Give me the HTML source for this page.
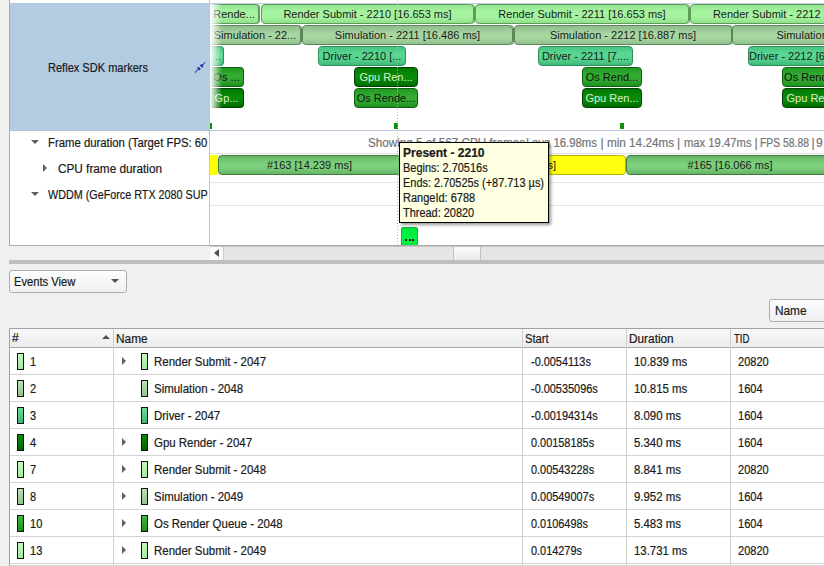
<!DOCTYPE html><html><head><meta charset="utf-8"><style>
*{margin:0;padding:0;box-sizing:border-box}
html,body{width:824px;height:566px;overflow:hidden;background:#f0f0f0;font-family:"Liberation Sans",sans-serif;color:#1a1a1a}
body{position:relative}
.a{position:absolute}
.t{position:absolute;white-space:nowrap;font-size:11px;line-height:13px;-webkit-text-stroke:0.2px currentColor}
.bar{position:absolute;height:20px;border:1px solid;border-radius:4px;font-size:11px;line-height:18px;text-align:center;white-space:nowrap;overflow:hidden}
.rs{background:linear-gradient(#94e490,#a6f4a0 40%,#a4f29e 70%,#92e08c);border-color:#5c9e58}
.sim{background:linear-gradient(#90bc8c,#a8d8a2 45%,#a6d4a0 70%,#92c08e);border-color:#5a8858}
.drv{background:linear-gradient(#48c482,#5ad894 40%,#54d08c 70%,#40b87a);border-color:#2a9058}
.osr{background:linear-gradient(#229a22,#34ae34 45%,#30a830 70%,#1e901e);border-color:#0e600e;color:#101010}
.gpu{background:linear-gradient(#007800,#0a8c0a 45%,#068406 70%,#006c00);border-color:#004000;color:#dcefcc}
.cpu{background:linear-gradient(#66b466,#7ed27e 45%,#7ccf7c 65%,#66b466);border-color:#3e7c3e}
.sh.rs{box-shadow:1px 0 0 #5c9e58}.sh.sim{box-shadow:1px 0 0 #5e8e5c}
.yel{background:#ffff10;border-color:#b8b800}
.tri-d{position:absolute;width:0;height:0;border-left:4px solid transparent;border-right:4px solid transparent;border-top:4px solid #606060}
.tri-r{position:absolute;width:0;height:0;border-top:4px solid transparent;border-bottom:4px solid transparent;border-left:4px solid #606060}
.chip{position:absolute;width:7px;height:17px;border:1px solid #111}
.chip.rs{background:linear-gradient(#c4f8be,#a0ec9a)}.chip.sim{background:linear-gradient(#bce0b6,#92c28e)}.chip.drv{background:linear-gradient(#6cdc9c,#40b474)}.chip.gpu{background:linear-gradient(#0a8c0a,#006400)}.chip.osr{background:linear-gradient(#3cbc3c,#1e8e1e)}
</style></head><body>
<div class="a" style="left:9px;top:0px;width:815px;height:246px;background:#fff;border-left:1px solid #acacac;border-bottom:1px solid #acacac"></div>
<div class="a" style="left:10px;top:3px;width:199px;height:128px;background:#b4cce2;border-bottom:1px solid #aac4de"></div>
<div class="a" style="left:209px;top:0px;width:1px;height:245px;background:#c4c4c4"></div>
<div class="a" style="left:210px;top:3px;width:614px;height:1px;background:#bcd2ec"></div>
<div class="a" style="left:210px;top:130px;width:614px;height:1px;background:#b8c8d8"></div>
<div class="a" style="left:210px;top:153px;width:614px;height:1px;background:#e4e4e4"></div>
<div class="a" style="left:210px;top:182px;width:614px;height:1px;background:#e4e4e4"></div>
<div class="a" style="left:210px;top:205px;width:614px;height:1px;background:#e4e4e4"></div>
<div class="t" style="left:48px;top:61px;font-size:12px;line-height:14px;transform:scaleX(0.9200);transform-origin:0 0;">Reflex SDK markers</div>
<svg class="a" style="left:193px;top:60px" width="14" height="14" viewBox="0 0 14 14"><path d="M2 12.5 L5.2 9.3 M9.3 5.2 L12.3 2.2" stroke="#2a2aa0" stroke-width="1.2" stroke-dasharray="1.5 0.6"/><rect x="-1.6" y="-1.1" width="3.2" height="2.2" fill="#2a2aa0" transform="translate(5.9 8.6) rotate(45)"/><rect x="-1.6" y="-1.1" width="3.2" height="2.2" fill="#2a2aa0" transform="translate(8.8 5.8) rotate(45)"/></svg>
<div class="tri-d" style="left:31px;top:140px"></div>
<div class="tri-r" style="left:43px;top:164px"></div>
<div class="tri-d" style="left:31px;top:192px"></div>
<div class="a" style="left:0;top:0;width:209px;height:245px;overflow:hidden">
<div class="t" style="left:48px;top:136px;font-size:12px;line-height:14px;transform:scaleX(0.9447);transform-origin:0 0;">Frame duration (Target FPS: 60</div>
<div class="t" style="left:58px;top:162px;font-size:12px;line-height:14px;transform:scaleX(0.9807);transform-origin:0 0;">CPU frame duration</div>
<div class="t" style="left:48px;top:188px;font-size:12px;line-height:14px;transform:scaleX(0.8981);transform-origin:0 0;">WDDM (GeForce RTX 2080 SUP</div>
</div>
<div class="a" style="left:210px;top:0;width:614px;height:245px;overflow:hidden">
<div class="bar rs sh" style="left:0px;top:4px;width:49px;border-left:0;border-top-left-radius:0;border-bottom-left-radius:0;">Rende...</div>
<div class="bar rs sh" style="left:51px;top:4px;width:213px;">Render Submit - 2210 [16.653 ms]</div>
<div class="bar rs sh" style="left:265px;top:4px;width:214px;">Render Submit - 2211 [16.653 ms]</div>
<div class="bar rs" style="left:480px;top:4px;width:214px;">Render Submit - 2212 [16.653 ms]</div>
<div class="bar sim sh" style="left:0px;top:25px;width:91px;border-left:0;border-top-left-radius:0;border-bottom-left-radius:0;">Simulation - 22...</div>
<div class="bar sim sh" style="left:92px;top:25px;width:211px;">Simulation - 2211 [16.486 ms]</div>
<div class="bar sim sh" style="left:304px;top:25px;width:218px;">Simulation - 2212 [16.887 ms]</div>
<div class="bar sim" style="left:522px;top:25px;width:235px;">Simulation - 2213 [16.887 ms]</div>
<div class="bar drv" style="left:0px;top:46px;width:14px;border-left:0;border-top-left-radius:0;border-bottom-left-radius:0;">...</div>
<div class="bar drv" style="left:108px;top:46px;width:88px;">Driver - 2210 [...</div>
<div class="bar drv" style="left:328px;top:46px;width:95px;">Driver - 2211 [7....</div>
<div class="bar drv" style="left:538px;top:46px;width:103px;">Driver - 2212 [6.5 ms]</div>
<div class="bar osr" style="left:0px;top:67px;width:34px;border-left:0;border-top-left-radius:0;border-bottom-left-radius:0;">Os ...</div>
<div class="bar gpu" style="left:144px;top:67px;width:64px;">Gpu Ren...</div>
<div class="bar osr" style="left:372px;top:67px;width:60px;">Os Rend...</div>
<div class="bar osr" style="left:572px;top:67px;width:69px;">Os Render Q</div>
<div class="bar gpu" style="left:0px;top:88px;width:34px;border-left:0;border-top-left-radius:0;border-bottom-left-radius:0;">Gp...</div>
<div class="bar osr" style="left:144px;top:88px;width:64px;">Os Rende...</div>
<div class="bar gpu" style="left:372px;top:88px;width:60px;">Gpu Ren...</div>
<div class="bar gpu" style="left:572px;top:88px;width:69px;">Gpu Render</div>
<div class="a" style="left:0px;top:123px;width:2px;height:6px;background:#109010"></div>
<div class="a" style="left:184px;top:123px;width:4px;height:6px;background:#109010"></div>
<div class="a" style="left:410px;top:123px;width:4px;height:6px;background:#109010"></div>
<div class="a" style="left:0;top:4px;width:12px;height:104px;background:linear-gradient(to right,rgba(255,255,255,1),rgba(255,255,255,0))"></div>
<div class="t" style="left:158px;top:136px;font-size:12px;line-height:14px;color:#747474;transform:scaleX(0.9727);transform-origin:0 0;">Showing 5 of 567 CPU frames</div>
<div class="t" style="left:316px;top:136px;font-size:12px;line-height:14px;color:#747474;">|</div>
<div class="t" style="left:322px;top:136px;font-size:12px;line-height:14px;color:#747474;transform:scaleX(0.9460);transform-origin:0 0;">avg 16.98ms</div>
<div class="t" style="left:390.5px;top:136px;font-size:12px;line-height:14px;color:#747474;">|</div>
<div class="t" style="left:396.5px;top:136px;font-size:12px;line-height:14px;color:#747474;transform:scaleX(0.9753);transform-origin:0 0;">min 14.24ms</div>
<div class="t" style="left:467px;top:136px;font-size:12px;line-height:14px;color:#747474;">|</div>
<div class="t" style="left:473.5px;top:136px;font-size:12px;line-height:14px;color:#747474;transform:scaleX(0.9371);transform-origin:0 0;">max 19.47ms</div>
<div class="t" style="left:544.5px;top:136px;font-size:12px;line-height:14px;color:#747474;">|</div>
<div class="t" style="left:550px;top:136px;font-size:12px;line-height:14px;color:#747474;transform:scaleX(0.8642);transform-origin:0 0;">FPS 58.88</div>
<div class="t" style="left:601.5px;top:136px;font-size:12px;line-height:14px;color:#747474;">|</div>
<div class="t" style="left:606px;top:136px;font-size:12px;line-height:14px;color:#747474;">9</div>
<div class="a" style="left:0;top:155px;width:8px;height:20px;background:#ffff00"></div>
<div class="bar cpu" style="left:8px;top:155px;width:183px;">#163 [14.239 ms]</div>
<div class="bar yel" style="left:191px;top:155px;width:225px;">#164 [16.653 ms]</div>
<div class="bar cpu" style="left:416px;top:155px;width:208px;">#165 [16.066 ms]</div>
<div class="a" style="left:191px;top:227px;width:17px;height:22px;background:linear-gradient(#00e83a,#00f442 50%,#00e83a);border:1px solid #22a844;border-radius:2px"></div>
<div class="a" style="left:195px;top:239px;width:2px;height:2px;background:#102010"></div>
<div class="a" style="left:198.5px;top:239px;width:2px;height:2px;background:#102010"></div>
<div class="a" style="left:202px;top:239px;width:2px;height:2px;background:#102010"></div>
<div class="a" style="left:187px;top:1px;width:1px;height:244px;background:repeating-linear-gradient(#b4b4b4 0 1px,transparent 1px 3px)"></div>
</div>
<div class="a" style="left:399px;top:142px;width:150px;height:81px;background:#ffffe1;border:1px solid #000;box-shadow:2px 2px 3px rgba(0,0,0,.4)"></div>
<div class="t" style="left:403px;top:146px;font-size:12px;line-height:14px;font-weight:bold;transform:scaleX(1.0015);transform-origin:0 0;">Present - 2210</div>
<div class="t" style="left:403px;top:161px;font-size:12px;line-height:14px;transform:scaleX(0.9123);transform-origin:0 0;">Begins: 2.70516s</div>
<div class="t" style="left:403px;top:176px;font-size:12px;line-height:14px;transform:scaleX(0.9115);transform-origin:0 0;">Ends: 2.70525s (+87.713 µs)</div>
<div class="t" style="left:403px;top:191px;font-size:12px;line-height:14px;transform:scaleX(0.9170);transform-origin:0 0;">RangeId: 6788</div>
<div class="t" style="left:403px;top:206px;font-size:12px;line-height:14px;transform:scaleX(0.9121);transform-origin:0 0;">Thread: 20820</div>
<div class="a" style="left:210px;top:246px;width:614px;height:14px;background:#e6e6e6"></div>
<div class="a" style="left:210px;top:246px;width:14px;height:14px;background:#fbfbfb;border-right:1px solid #c8c8c8"></div>
<div class="a" style="left:210px;top:246px;width:614px;height:1px;background:#c4c4c4"></div>
<div class="a" style="left:214px;top:249px;width:0;height:0;border-top:4px solid transparent;border-bottom:4px solid transparent;border-right:5px solid #505050"></div>
<div class="a" style="left:453px;top:247px;width:28px;height:13px;background:linear-gradient(#fbfbfb,#ebebeb);border-left:1px solid #c0c0c0;border-right:1px solid #c0c0c0"></div>
<div class="a" style="left:9px;top:260px;width:815px;height:4px;background:#bebebe"></div>
<div class="a" style="left:9px;top:270px;width:118px;height:23px;background:linear-gradient(#fdfdfd,#f0f0f0);border:1px solid #adadad;border-radius:3px"></div>
<div class="t" style="left:14px;top:275px;font-size:12px;line-height:14px;transform:scaleX(0.9314);transform-origin:0 0;">Events View</div>
<div class="a" style="left:111px;top:279px;width:0;height:0;border-left:4px solid transparent;border-right:4px solid transparent;border-top:4px solid #555"></div>
<div class="a" style="left:769px;top:299px;width:70px;height:23px;background:linear-gradient(#fdfdfd,#f0f0f0);border:1px solid #adadad;border-radius:3px"></div>
<div class="t" style="left:775px;top:304px;font-size:12px;line-height:14px;transform:scaleX(0.9841);transform-origin:0 0;">Name</div>
<div class="a" style="left:9px;top:328px;width:815px;height:238px;background:#fff;border-left:1px solid #a0a0a0;border-top:1px solid #a0a0a0"></div>
<div class="a" style="left:10px;top:329px;width:814px;height:18px;background:linear-gradient(#f8f8f8,#ececec)"></div>
<div class="a" style="left:10px;top:347px;width:814px;height:1px;background:#a8a8a8"></div>
<div class="a" style="left:113px;top:329px;width:1px;height:237px;background:#d0d0d0"></div>
<div class="a" style="left:522px;top:329px;width:1px;height:237px;background:#d0d0d0"></div>
<div class="a" style="left:626px;top:329px;width:1px;height:237px;background:#d0d0d0"></div>
<div class="a" style="left:730px;top:329px;width:1px;height:237px;background:#d0d0d0"></div>
<div class="t" style="left:12px;top:331px;font-size:12px;line-height:14px;">#</div>
<div class="a" style="left:102px;top:335px;width:0;height:0;border-left:4px solid transparent;border-right:4px solid transparent;border-bottom:4px solid #505050"></div>
<div class="t" style="left:116px;top:332px;font-size:12px;line-height:14px;transform:scaleX(0.9872);transform-origin:0 0;">Name</div>
<div class="t" style="left:525px;top:332px;font-size:12px;line-height:14px;transform:scaleX(0.9313);transform-origin:0 0;">Start</div>
<div class="t" style="left:629px;top:332px;font-size:12px;line-height:14px;transform:scaleX(0.9855);transform-origin:0 0;">Duration</div>
<div class="t" style="left:734px;top:332px;font-size:12px;line-height:14px;transform:scaleX(0.7967);transform-origin:0 0;">TID</div>
<div class="a" style="left:10px;top:374px;width:814px;height:1px;background:#d4d4d4"></div>
<div class="chip rs" style="left:17px;top:353px"></div>
<div class="t" style="left:30px;top:355px;font-size:12px;line-height:14px;transform:scaleX(0.9200);transform-origin:0 0;">1</div>
<div class="tri-r" style="left:122px;top:357px"></div>
<div class="chip rs" style="left:141px;top:353px"></div>
<div class="t" style="left:154px;top:355px;font-size:12px;line-height:14px;transform:scaleX(0.9550);transform-origin:0 0;">Render Submit - 2047</div>
<div class="t" style="left:531px;top:355px;font-size:12px;line-height:14px;transform:scaleX(0.9090);transform-origin:0 0;">-0.0054113s</div>
<div class="t" style="left:634px;top:355px;font-size:12px;line-height:14px;transform:scaleX(0.9500);transform-origin:0 0;">10.839 ms</div>
<div class="t" style="left:738px;top:355px;font-size:12px;line-height:14px;transform:scaleX(0.9200);transform-origin:0 0;">20820</div>
<div class="a" style="left:10px;top:401px;width:814px;height:1px;background:#d4d4d4"></div>
<div class="chip sim" style="left:17px;top:380px"></div>
<div class="t" style="left:30px;top:382px;font-size:12px;line-height:14px;transform:scaleX(0.9200);transform-origin:0 0;">2</div>
<div class="chip sim" style="left:141px;top:380px"></div>
<div class="t" style="left:154px;top:382px;font-size:12px;line-height:14px;transform:scaleX(0.9550);transform-origin:0 0;">Simulation - 2048</div>
<div class="t" style="left:531px;top:382px;font-size:12px;line-height:14px;transform:scaleX(0.9090);transform-origin:0 0;">-0.00535096s</div>
<div class="t" style="left:634px;top:382px;font-size:12px;line-height:14px;transform:scaleX(0.9500);transform-origin:0 0;">10.815 ms</div>
<div class="t" style="left:738px;top:382px;font-size:12px;line-height:14px;transform:scaleX(0.9200);transform-origin:0 0;">1604</div>
<div class="a" style="left:10px;top:428px;width:814px;height:1px;background:#d4d4d4"></div>
<div class="chip drv" style="left:17px;top:407px"></div>
<div class="t" style="left:30px;top:409px;font-size:12px;line-height:14px;transform:scaleX(0.9200);transform-origin:0 0;">3</div>
<div class="chip drv" style="left:141px;top:407px"></div>
<div class="t" style="left:154px;top:409px;font-size:12px;line-height:14px;transform:scaleX(0.9550);transform-origin:0 0;">Driver - 2047</div>
<div class="t" style="left:531px;top:409px;font-size:12px;line-height:14px;transform:scaleX(0.9090);transform-origin:0 0;">-0.00194314s</div>
<div class="t" style="left:634px;top:409px;font-size:12px;line-height:14px;transform:scaleX(0.9500);transform-origin:0 0;">8.090 ms</div>
<div class="t" style="left:738px;top:409px;font-size:12px;line-height:14px;transform:scaleX(0.9200);transform-origin:0 0;">1604</div>
<div class="a" style="left:10px;top:455px;width:814px;height:1px;background:#d4d4d4"></div>
<div class="chip gpu" style="left:17px;top:434px"></div>
<div class="t" style="left:30px;top:436px;font-size:12px;line-height:14px;transform:scaleX(0.9200);transform-origin:0 0;">4</div>
<div class="tri-r" style="left:122px;top:438px"></div>
<div class="chip gpu" style="left:141px;top:434px"></div>
<div class="t" style="left:154px;top:436px;font-size:12px;line-height:14px;transform:scaleX(0.9550);transform-origin:0 0;">Gpu Render - 2047</div>
<div class="t" style="left:531px;top:436px;font-size:12px;line-height:14px;transform:scaleX(0.9090);transform-origin:0 0;">0.00158185s</div>
<div class="t" style="left:634px;top:436px;font-size:12px;line-height:14px;transform:scaleX(0.9500);transform-origin:0 0;">5.340 ms</div>
<div class="t" style="left:738px;top:436px;font-size:12px;line-height:14px;transform:scaleX(0.9200);transform-origin:0 0;">1604</div>
<div class="a" style="left:10px;top:482px;width:814px;height:1px;background:#d4d4d4"></div>
<div class="chip rs" style="left:17px;top:461px"></div>
<div class="t" style="left:30px;top:463px;font-size:12px;line-height:14px;transform:scaleX(0.9200);transform-origin:0 0;">7</div>
<div class="tri-r" style="left:122px;top:465px"></div>
<div class="chip rs" style="left:141px;top:461px"></div>
<div class="t" style="left:154px;top:463px;font-size:12px;line-height:14px;transform:scaleX(0.9550);transform-origin:0 0;">Render Submit - 2048</div>
<div class="t" style="left:531px;top:463px;font-size:12px;line-height:14px;transform:scaleX(0.9090);transform-origin:0 0;">0.00543228s</div>
<div class="t" style="left:634px;top:463px;font-size:12px;line-height:14px;transform:scaleX(0.9500);transform-origin:0 0;">8.841 ms</div>
<div class="t" style="left:738px;top:463px;font-size:12px;line-height:14px;transform:scaleX(0.9200);transform-origin:0 0;">20820</div>
<div class="a" style="left:10px;top:509px;width:814px;height:1px;background:#d4d4d4"></div>
<div class="chip sim" style="left:17px;top:488px"></div>
<div class="t" style="left:30px;top:490px;font-size:12px;line-height:14px;transform:scaleX(0.9200);transform-origin:0 0;">8</div>
<div class="tri-r" style="left:122px;top:492px"></div>
<div class="chip sim" style="left:141px;top:488px"></div>
<div class="t" style="left:154px;top:490px;font-size:12px;line-height:14px;transform:scaleX(0.9550);transform-origin:0 0;">Simulation - 2049</div>
<div class="t" style="left:531px;top:490px;font-size:12px;line-height:14px;transform:scaleX(0.9090);transform-origin:0 0;">0.00549007s</div>
<div class="t" style="left:634px;top:490px;font-size:12px;line-height:14px;transform:scaleX(0.9500);transform-origin:0 0;">9.952 ms</div>
<div class="t" style="left:738px;top:490px;font-size:12px;line-height:14px;transform:scaleX(0.9200);transform-origin:0 0;">1604</div>
<div class="a" style="left:10px;top:536px;width:814px;height:1px;background:#d4d4d4"></div>
<div class="chip osr" style="left:17px;top:515px"></div>
<div class="t" style="left:30px;top:517px;font-size:12px;line-height:14px;transform:scaleX(0.9200);transform-origin:0 0;">10</div>
<div class="tri-r" style="left:122px;top:519px"></div>
<div class="chip osr" style="left:141px;top:515px"></div>
<div class="t" style="left:154px;top:517px;font-size:12px;line-height:14px;transform:scaleX(0.9550);transform-origin:0 0;">Os Render Queue - 2048</div>
<div class="t" style="left:531px;top:517px;font-size:12px;line-height:14px;transform:scaleX(0.9090);transform-origin:0 0;">0.0106498s</div>
<div class="t" style="left:634px;top:517px;font-size:12px;line-height:14px;transform:scaleX(0.9500);transform-origin:0 0;">5.483 ms</div>
<div class="t" style="left:738px;top:517px;font-size:12px;line-height:14px;transform:scaleX(0.9200);transform-origin:0 0;">1604</div>
<div class="a" style="left:10px;top:563px;width:814px;height:1px;background:#d4d4d4"></div>
<div class="chip rs" style="left:17px;top:542px"></div>
<div class="t" style="left:30px;top:544px;font-size:12px;line-height:14px;transform:scaleX(0.9200);transform-origin:0 0;">13</div>
<div class="tri-r" style="left:122px;top:546px"></div>
<div class="chip rs" style="left:141px;top:542px"></div>
<div class="t" style="left:154px;top:544px;font-size:12px;line-height:14px;transform:scaleX(0.9550);transform-origin:0 0;">Render Submit - 2049</div>
<div class="t" style="left:531px;top:544px;font-size:12px;line-height:14px;transform:scaleX(0.9090);transform-origin:0 0;">0.014279s</div>
<div class="t" style="left:634px;top:544px;font-size:12px;line-height:14px;transform:scaleX(0.9500);transform-origin:0 0;">13.731 ms</div>
<div class="t" style="left:738px;top:544px;font-size:12px;line-height:14px;transform:scaleX(0.9200);transform-origin:0 0;">20820</div>
<div class="a" style="left:10px;top:565px;width:814px;height:1px;background:#d4d4d4"></div>
</body></html>
